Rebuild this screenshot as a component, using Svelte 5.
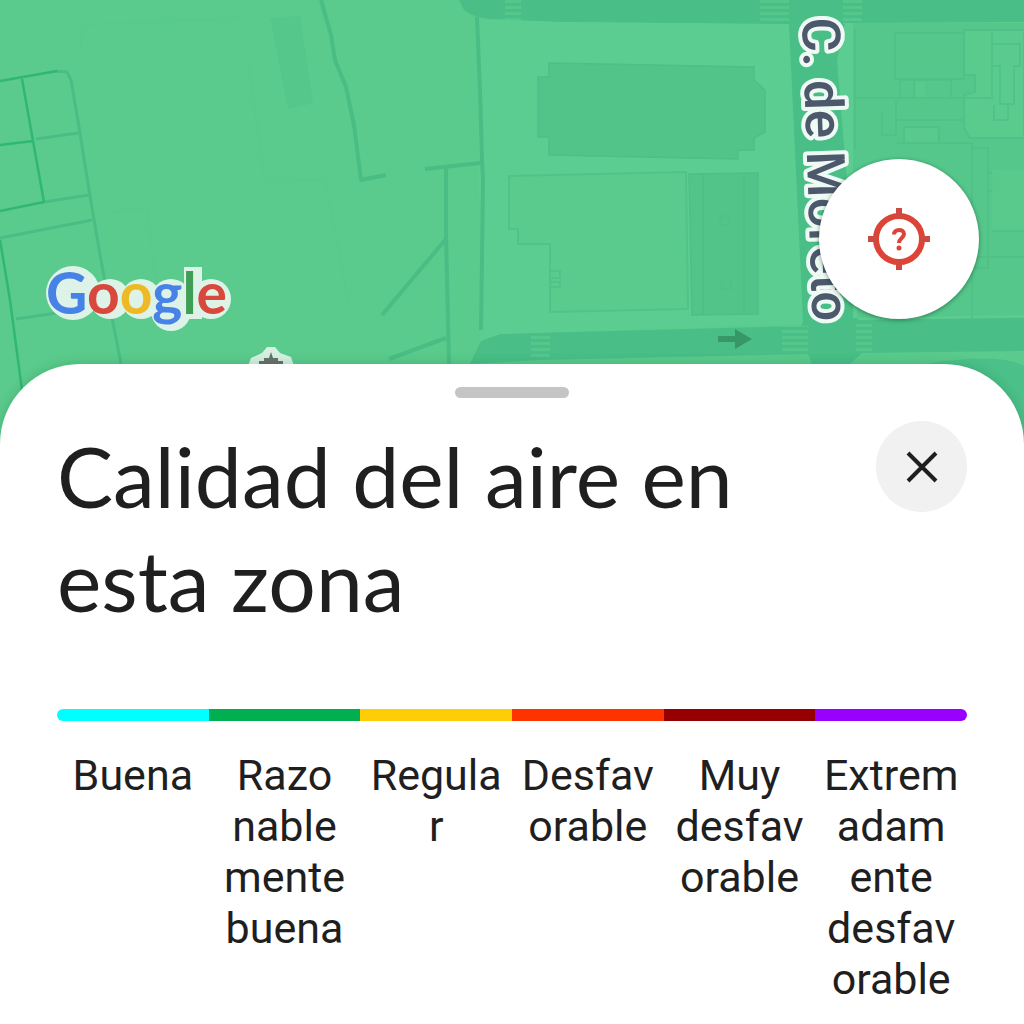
<script>
  const levels = [
    { color: '#00ffff', lines: ['Buena'] },
    { color: '#00b050', lines: ['Razo', 'nable', 'mente', 'buena'] },
    { color: '#ffcd05', lines: ['Regula', 'r'] },
    { color: '#ff3300', lines: ['Desfav', 'orable'] },
    { color: '#960000', lines: ['Muy', 'desfav', 'orable'] },
    { color: '#9900ff', lines: ['Extrem', 'adam', 'ente', 'desfav', 'orable'] }
  ];

  // Zebra crossings: x, y, width, height of the striped area
  const crossings = [
    [505, 0, 16, 20],
    [760, 0, 29, 24],
    [843, 0, 19, 24],
    [531, 334, 19, 26],
    [782, 326, 26, 28],
    [856, 322, 16, 30]
  ];
</script>

<main>
  <section class="map" aria-label="Mapa">
    <svg class="tiles" viewBox="0 0 1024 444" preserveAspectRatio="xMidYMin slice" aria-hidden="true">
      <defs>
        <pattern id="stripes" width="30" height="6" patternUnits="userSpaceOnUse">
          <rect width="30" height="3" fill="#5ccd90" />
        </pattern>
      </defs>
      <rect width="1024" height="444" fill="#5acb8c" />

      <!-- pavements -->
      <path d="M478 20 790 24 805 324 500 334 480 345Z" fill="#5ccd90" />
      <path d="M842 22H1024V316L856 320Z" fill="#5ccd90" />

      <!-- roads -->
      <path d="M459 0 464 10Q472 17 490 19L560 22 789 24 802 326 500 334 481 341 470 364 540 360 808 354 812 364H850L862 353 1024 351V318L856 320 840 60 845 23 1024 22V0Z" fill="#49be87" fill-rule="evenodd" />
      <path d="M480 19.500 560 22 789 24.500 801 80 803 323 500 334 482 340Z" fill="#5ccd90" />
      <path d="M843 23H1024V315L858 318Z" fill="#55c78b" />
      <path d="M789 24H845L858 320H803Z" fill="#49be87" />
      <path d="M837 60 845 23H853V318H858Z" fill="#5ccd90" />

      <!-- blocks -->
      <g fill="#52c48a" stroke="#4ebf86" stroke-width="1.500">
        <path d="M549 63 754 67V80L765 90V132L754 138V150H738V159L549 155V137H538V77H549Z" />
        <path d="M689 174 758 173V314L692 315Z" />
        <path d="M703 174V315M744 174V315" />
        <path d="M270 18 300 16 313 103 288 109Z" stroke="none" opacity=".7" />
      </g>
      <path d="M509 176 686 172 688 309 550 312V244H518V229H509Z" fill="#5acb8c" stroke="#51c388" stroke-width="2" />
      <path d="M550 271H560V278H550M551 282H560V287H550" fill="none" stroke="#51c388" stroke-width="2" />
      <path d="M720 216h9v9h-9zM722 280h9v9h-9z" fill="none" stroke="#4ebf86" />

      <path d="M964 30H1024V138H970L964 128V95L975 92V75H964Z" fill="#5acb8c" stroke="#50c287" stroke-width="2" />
      <g fill="none" stroke="#4fc086" stroke-width="1.500">
        <path d="M895 33H964V79H895ZM855 98H992V30M900 98V80H951V98M914 80V98M896 100V135H882V112M904 127H939V143H904ZM896 143H972V320M896 120H964M973 148H988V268H973M988 173H998V191H988M992 231H1024M972 257H1024M992 44H1020V66H1014V104H1000V66H992ZM994 105V120H1008V105M855 30V150" />
      </g>
      <path d="M905 128h32v14h-32zM916 82h9v15h-9zM992 170h32v60h-32z" fill="#5acb8c" opacity=".8" />
      <path d="M925 364Q1000 352 1024 366V444H980Z" fill="#4bc088" />

      <!-- faint areas -->
      <g fill="none" stroke="#55c78a" stroke-width="2">
        <path d="M80 50 83 25 240 18M110 212 147 208 160 312M248 60 265 182 325 180 350 310" opacity=".25" />
      </g>

      <!-- footpaths -->
      <g fill="none" stroke="#4abd84" stroke-width="4" stroke-linejoin="round">
        <path d="M321 0 331 35 335 60 346 87 354 125 361 180 386 175" />
        <path d="M477 17 480 90 482 160 483 180 481 330" />
        <path d="M425 169 481 163M446 167V235L449 364M446 239 382 315M446 338 389 359" />
        <path d="M55 71 67 72 71 80 79 127 90 196 102 266 121 364M36 139 78 133M44 202 89 195M0 238 92 220M16 319 104 306" stroke-width="3" />
      </g>
      <g fill="none" stroke="#30b873" stroke-width="2.500">
        <path d="M0 81 57 71M22 79 33 141 44 202M0 145 33 141M0 211 44 202M0 240 10 300 22 390" />
      </g>

      {#each crossings as [x, y, w, h]}
        <rect {x} {y} width={w} height={h} fill="url(#stripes)" opacity=".6" />
      {/each}

      <path d="M718 336H735V329L752 339 735 349V342H718Z" fill="#379766" />

      <!-- monument marker -->
      <path d="M248 366 251 358 262 353 267 347H275L280 353 291 357 294 366Z" fill="#d6efe2" />
      <path d="M259 364V361H264V358H269L271 352 273 358H278V361H283V364Z" fill="#68716d" />

      <text class="street" transform="translate(802 18) rotate(88)">C. de Moreto</text>

      <!-- brand plate and wordmark -->
      <g fill="#def3e8">
        <circle cx="73" cy="293" r="27" />
        <circle cx="110" cy="299" r="20" />
        <circle cx="141" cy="299" r="20" />
        <circle cx="171" cy="299" r="20" />
        <circle cx="171" cy="311" r="20" />
        <rect x="184" y="267" width="18" height="52" />
        <circle cx="211" cy="299" r="20" />
      </g>
      <text class="brand" x="46" y="314"><tspan fill="#4783e6">G</tspan><tspan fill="#d9483d">o</tspan><tspan fill="#edba25">o</tspan><tspan fill="#4783e6">g</tspan><tspan fill="#3f9f55">l</tspan><tspan fill="#d9483d">e</tspan></text>
    </svg>

    <button class="locate" aria-label="Ubicación desconocida">
      <svg viewBox="0 0 64 64" aria-hidden="true">
        <circle cx="32" cy="32" r="23" fill="none" stroke="#dc4437" stroke-width="6" />
        <path d="M32 1V10M32 54V63M1 32H10M54 32H63" stroke="#cf4942" stroke-width="6" />
        <path d="M27 27.500C27 21.500 37 21.500 37 27C37 31 32 31 32 36" fill="none" stroke="#dc4437" stroke-width="4" />
        <circle cx="32" cy="41" r="2.500" fill="#dc4437" />
      </svg>
    </button>
  </section>

  <section class="sheet">
    <div class="handle"></div>
    <header>
      <h1>Calidad del aire en esta zona</h1>
      <button class="close" aria-label="Cerrar">
        <svg viewBox="0 0 32 32" aria-hidden="true">
          <path d="M2 2 30 30M30 2 2 30" stroke="#1f1f1f" stroke-width="4" />
        </svg>
      </button>
    </header>

    <ul class="scale">
      {#each levels as level}
        <li>
          <div class="swatch" style:background={level.color}></div>
          <p>
            {#each level.lines as line}
              <span>{line}</span>
            {/each}
          </p>
        </li>
      {/each}
    </ul>
  </section>
</main>

<style>
  :global(body) {
    margin: 0;
    background: #fff;
  }
  main {
    min-height: 100vh;
    color: #1f1f1f;
    font-family: Roboto, 'Liberation Sans', sans-serif;
    overflow: hidden;
  }
  .map {
    position: relative;
    height: 444px;
    background: #5acb8c;
  }
  .tiles {
    display: block;
    width: 100%;
    height: 100%;
  }
  .street {
    font: 500 53px Roboto, sans-serif;
    fill: #4c586c;
    stroke: #effaf5;
    stroke-width: 8px;
    stroke-linejoin: round;
    paint-order: stroke;
  }
  .brand {
    font: 700 57px Lato, sans-serif;
  }
  button {
    display: grid;
    place-items: center;
    padding: 0;
    border: 0;
    border-radius: 50%;
  }
  .locate {
    position: absolute;
    top: 159px;
    right: 45px;
    width: 160px;
    height: 160px;
    background: #fff;
    box-shadow: 0 1px 4px rgb(0 50 25 / 50%);
  }
  .locate svg {
    width: 64px;
    height: 64px;
  }
  .sheet {
    position: relative;
    margin-top: -80px;
    padding: 23px 57px 20px;
    border-radius: 80px 80px 0 0;
    background: #fff;
    box-shadow: 0 0 12px rgb(0 70 35 / 20%);
  }
  .handle {
    width: 114px;
    height: 11px;
    margin: 0 auto 23px;
    border-radius: 6px;
    background: #c5c5c5;
  }
  header {
    display: flex;
    align-items: flex-start;
    justify-content: space-between;
    gap: 40px;
  }
  h1 {
    max-width: 720px;
    margin: 0;
    padding-top: 3px;
    font: 400 84px/104px Lato, sans-serif;
  }
  .close {
    flex: none;
    width: 91px;
    height: 91px;
    background: #f1f1f1;
  }
  .close svg {
    width: 32px;
    height: 32px;
  }
  .scale {
    display: grid;
    grid-template-columns: repeat(6, 1fr);
    margin: 77px 0 0;
    padding: 0;
    list-style: none;
  }
  .swatch {
    height: 12px;
  }
  li:first-child .swatch {
    border-radius: 6px 0 0 6px;
  }
  li:last-child .swatch {
    border-radius: 0 6px 6px 0;
  }
  p {
    margin: 29px 0 0;
    font-size: 43px;
    line-height: 51px;
    text-align: center;
  }
  p span {
    display: block;
  }
</style>
